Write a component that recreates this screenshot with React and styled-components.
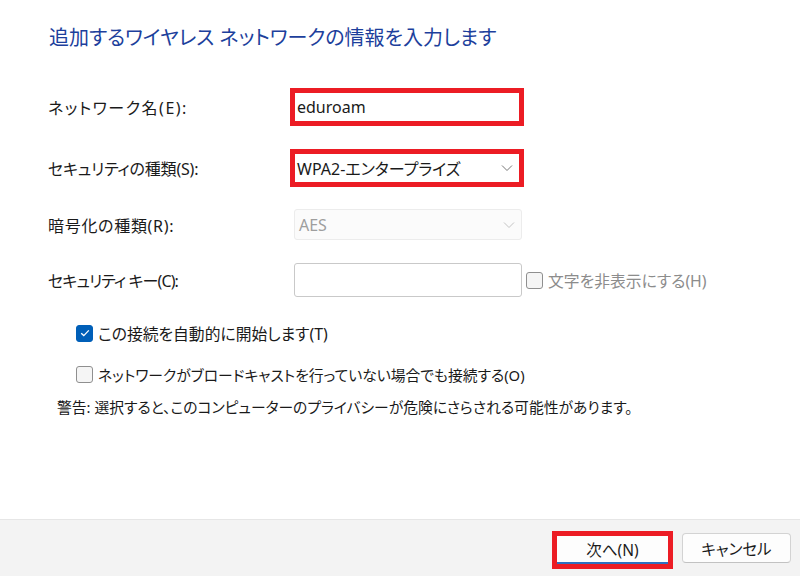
import React from "react";
import styled, { createGlobalStyle } from "styled-components";

const GlobalStyle = createGlobalStyle`
  html, body {
    margin: 0;
    padding: 0;
    background: #ffffff;
  }
  body {
    font-family: "Noto Sans", "Noto Sans CJK JP", sans-serif;
    font-feature-settings: "palt";
    color: #1a1a1a;
  }
`;

const Chevron = () => (
  <svg width="12" height="8" viewBox="0 0 12 8">
    <path d="M1 1.5 L6 6.5 L11 1.5" fill="none" stroke="currentColor" strokeWidth="1" />
  </svg>
);

const Check = () => (
  <svg width="10" height="8" viewBox="0 0 10 8">
    <path d="M1.2 4.2 L3.8 6.6 L8.8 1.4" fill="none" stroke="#fff" strokeWidth="1.3" />
  </svg>
);

const App = () => {
  return (
    <Page>
      <GlobalStyle />
      <Content>
        <Title>追加するワイヤレス ネットワークの情報を入力します</Title>

        <Form>
          <Row $top={37} $h={38}>
            <Label $spacing={1.5}>ネットワーク名(E):</Label>
            <Highlight>
              <TextBox $flat>eduroam</TextBox>
            </Highlight>
          </Row>

          <Row $top={23} $h={38}>
            <Label $spacing={-0.2}>セキュリティの種類(S):</Label>
            <Highlight>
              <Select $flat>
                <span>WPA2-エンタープライズ</span>
                <Chevron />
              </Select>
            </Highlight>
          </Row>

          <Row $top={22} $h={31}>
            <Label $spacing={0.7}>暗号化の種類(R):</Label>
            <Select $disabled>
              <span>AES</span>
              <Chevron />
            </Select>
          </Row>

          <Row $top={23} $h={34}>
            <Label $spacing={-0.9}>セキュリティ キー(C):</Label>
            <TextBox />
            <Option $muted $size={15.8}>
              <Box />
              文字を非表示にする(H)
            </Option>
          </Row>
        </Form>

        <Checks>
          <Option $size={15.8}>
            <Box $checked>
              <Check />
            </Box>
            この接続を自動的に開始します(T)
          </Option>
          <Option $size={14.8}>
            <Box />
            ネットワークがブロードキャストを行っていない場合でも接続する(O)
          </Option>
        </Checks>

        <Warning>
          警告: 選択すると、このコンピューターのプライバシーが危険にさらされる可能性があります。
        </Warning>
      </Content>

      <Footer>
        <NextFrame>
          <Button $primary>次へ(N)</Button>
        </NextFrame>
        <Button>キャンセル</Button>
      </Footer>
    </Page>
  );
};

export default App;

const Page = styled.div`
  width: 800px;
  height: 576px;
  display: flex;
  flex-direction: column;
  overflow: hidden;
`;

const Content = styled.div`
  flex: 1;
  padding: 25px 0 0 48px;
`;

const Title = styled.h1`
  margin: 0 0 0 1px;
  height: 26px;
  line-height: 26px;
  font-size: 20px;
  font-weight: 400;
  color: #1d3f9c;
`;

const Form = styled.div`
  display: flex;
  flex-direction: column;
`;

const Row = styled.div`
  display: flex;
  align-items: center;
  height: ${(p) => p.$h}px;
  margin-top: ${(p) => p.$top}px;
`;

const Label = styled.div`
  width: 242px;
  flex: none;
  font-size: 16px;
  letter-spacing: ${(p) => p.$spacing || 0}px;
`;

const Highlight = styled.div`
  width: 234px;
  height: 38px;
  box-sizing: border-box;
  border: 5px solid #ec1c24;
  display: flex;
`;

const TextBox = styled.div`
  box-sizing: border-box;
  width: ${(p) => (p.$flat ? "100%" : "228px")};
  height: 100%;
  margin-left: ${(p) => (p.$flat ? 0 : 4)}px;
  padding: 0 2px;
  display: flex;
  align-items: center;
  font-size: 16px;
  background: #fff;
  border: ${(p) => (p.$flat ? "none" : "1px solid #c9c9c9")};
  border-radius: ${(p) => (p.$flat ? 0 : 3)}px;
`;

const Select = styled.div`
  box-sizing: border-box;
  width: ${(p) => (p.$flat ? "100%" : "228px")};
  height: 100%;
  margin-left: ${(p) => (p.$flat ? 0 : 4)}px;
  padding: 0 4px 0 ${(p) => (p.$flat ? 2 : 4)}px;
  display: flex;
  align-items: center;
  justify-content: space-between;
  font-size: 16px;
  color: ${(p) => (p.$disabled ? "#9e9e9e" : "#1a1a1a")};
  background: ${(p) => (p.$disabled ? "#fbfbfb" : "#fff")};
  border: ${(p) => (p.$disabled ? "1px solid #ececec" : "none")};
  border-radius: ${(p) => (p.$disabled ? 3 : 0)}px;

  svg {
    color: ${(p) => (p.$disabled ? "#c4c4c4" : "#777")};
    margin-right: 2px;
  }
`;

const Option = styled.label`
  display: flex;
  align-items: center;
  gap: 5px;
  height: 22px;
  white-space: nowrap;
  font-size: ${(p) => p.$size || 15}px;
  color: ${(p) => (p.$muted ? "#8c8c8c" : "#1a1a1a")};
  margin-left: ${(p) => (p.$muted ? 4 : 0)}px;
`;

const Box = styled.span`
  box-sizing: border-box;
  flex: none;
  width: 17px;
  height: 17px;
  border-radius: 3px;
  display: flex;
  align-items: center;
  justify-content: center;
  background: ${(p) => (p.$checked ? "#005fb8" : "#f5f5f5")};
  border: 1px solid ${(p) => (p.$checked ? "#005fb8" : "#8f8f8f")};
`;

const Checks = styled.div`
  display: flex;
  flex-direction: column;
  gap: 19px;
  margin: 25px 0 0 28px;
`;

const Warning = styled.div`
  margin: 11px 0 0 9px;
  height: 22px;
  line-height: 22px;
  font-size: 14.8px;
`;

const Footer = styled.div`
  height: 57px;
  box-sizing: border-box;
  background: #f3f3f3;
  border-top: 1px solid #e6e6e6;
  display: flex;
  justify-content: flex-end;
  align-items: flex-start;
  gap: 9px;
  padding: 11px 9px 0 0;

  & > button {
    margin-top: 2px;
  }
`;

const NextFrame = styled.div`
  border: 5px solid #ec1c24;
  display: flex;
`;

const Button = styled.button`
  box-sizing: border-box;
  width: ${(p) => (p.$primary ? 111 : 109)}px;
  height: ${(p) => (p.$primary ? 28 : 30)}px;
  font-family: inherit;
  font-feature-settings: "palt";
  font-size: 15.5px;
  color: #1a1a1a;
  background: #fdfdfd;
  border: ${(p) => (p.$primary ? "none" : "1px solid #d3d3d3")};
  border-bottom: ${(p) => (p.$primary ? "2px solid #2f6fbf" : "1px solid #c2c2c2")};
  border-radius: ${(p) => (p.$primary ? 0 : 4)}px;
  padding: 0;
`;
